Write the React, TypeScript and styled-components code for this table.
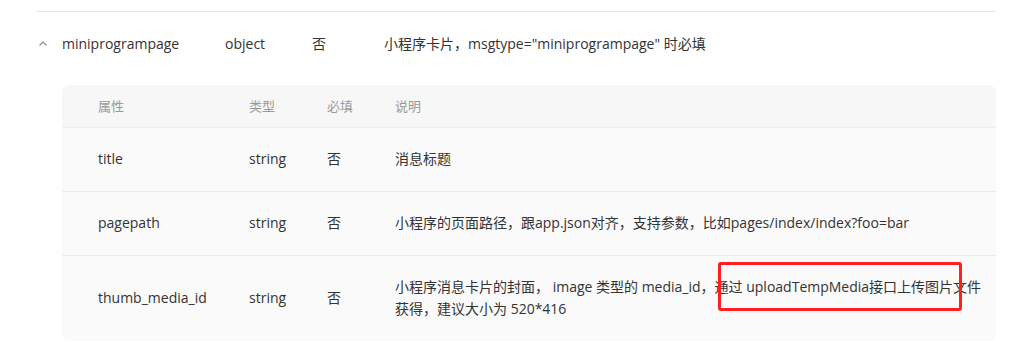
import React from 'react';
import styled, { createGlobalStyle } from 'styled-components';

const GlobalStyle = createGlobalStyle`
  html, body {
    margin: 0;
    padding: 0;
    background: #ffffff;
  }
  body {
    font-family: "Open Sans", "Noto Sans CJK SC", sans-serif;
    color: #333333;
  }
`;

interface Field {
  name: string;
  type: string;
  required: string;
  desc: string;
}

const fields: Field[] = [
  { name: 'title', type: 'string', required: '否', desc: '消息标题' },
  {
    name: 'pagepath',
    type: 'string',
    required: '否',
    desc: '小程序的页面路径，跟app.json对齐，支持参数，比如pages/index/index?foo=bar',
  },
  {
    name: 'thumb_media_id',
    type: 'string',
    required: '否',
    desc: '小程序消息卡片的封面， image 类型的 media_id，通过 uploadTempMedia接口上传图片文件获得，建议大小为 520*416',
  },
];

const Page = styled.div`
  position: relative;
  width: 1019px;
  height: 346px;
  padding: 11px 23px 0 36px;
  box-sizing: border-box;
  overflow: hidden;
`;

const Section = styled.div`
  border-top: 1px solid #e6e6e6;
`;

const ParamRow = styled.div`
  display: grid;
  grid-template-columns: 26px 163px 87px 72px 1fr;
  align-items: center;
  height: 62px;
  font-size: 14px;
  color: #333333;
`;

const Chevron = styled.svg`
  width: 10px;
  height: 10px;
  margin-left: 2px;
  margin-top: 1px;
`;

const SubTable = styled.div`
  margin: 11px 0 0 26px;
  background: #fafafa;
  border-radius: 8px;
  overflow: hidden;
`;

const TableRow = styled.div<{ $head?: boolean }>`
  display: grid;
  grid-template-columns: 151px 78px 68px 1fr;
  background: ${({ $head }) => ($head ? '#f7f7f7' : '#fafafa')};
  border-top: ${({ $head }) => ($head ? 'none' : '1px solid #ededed')};
  color: ${({ $head }) => ($head ? '#999999' : '#333333')};
  font-size: ${({ $head }) => ($head ? '13px' : '14px')};
`;

const Cell = styled.div<{ $head?: boolean }>`
  display: flex;
  align-items: center;
  padding: ${({ $head }) => ($head ? '10px 0 10px 36px' : '20px 0 21px 36px')};
  line-height: 22px;
`;

const DescCell = styled(Cell)`
  padding-right: 4px;
`;

const Highlight = styled.div`
  position: absolute;
  left: 718px;
  top: 262px;
  width: 244px;
  height: 49px;
  border: 3px solid #ff1f1f;
  border-radius: 3px;
  box-sizing: border-box;
  pointer-events: none;
`;

const App: React.FC = () => {
  return (
    <Page>
      <GlobalStyle />
      <Section>
        <ParamRow>
          <Chevron viewBox="0 0 10 10" fill="none">
            <path d="M1.5 6.5 L5 3 L8.5 6.5" stroke="#8c8c8c" strokeWidth="1.1" />
          </Chevron>
          <span>miniprogrampage</span>
          <span>object</span>
          <span>否</span>
          <span>小程序卡片，msgtype="miniprogrampage" 时必填</span>
        </ParamRow>

        <SubTable>
          <TableRow $head>
            <Cell $head>属性</Cell>
            <Cell $head>类型</Cell>
            <Cell $head>必填</Cell>
            <DescCell $head>说明</DescCell>
          </TableRow>
          {fields.map(field => (
            <TableRow key={field.name}>
              <Cell>{field.name}</Cell>
              <Cell>{field.type}</Cell>
              <Cell>{field.required}</Cell>
              <DescCell>{field.desc}</DescCell>
            </TableRow>
          ))}
        </SubTable>
      </Section>
      <Highlight />
    </Page>
  );
};

export default App;
